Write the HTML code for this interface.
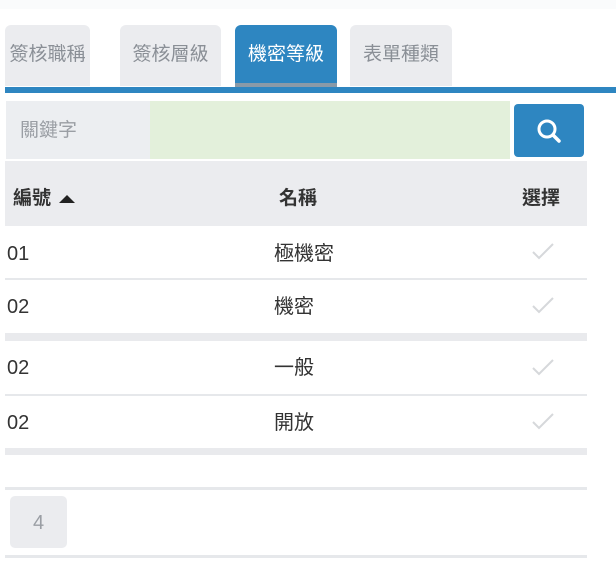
<!DOCTYPE html>
<html><head><meta charset="utf-8"><style>
*{margin:0;padding:0;box-sizing:border-box}
body{width:616px;height:566px;background:#fff;position:relative;overflow:hidden;font-family:"Liberation Sans","Noto Sans CJK TC",sans-serif}
.a{position:absolute}
.tab{position:absolute;top:25px;height:61px;background:#ebecef;border-radius:6px 6px 0 0;color:#8a8f96;font-size:19px;line-height:60px;text-align:center}
.t{position:absolute;font-size:20px;color:#333;line-height:24px}
.h{font-weight:bold;color:#333;font-size:19px}
.chk{position:absolute;left:531px;width:24px;height:20px}
</style></head><body>
<div class="a" style="left:0;top:0;width:616px;height:9px;background:#fafbfc"></div>
<div class="tab" style="left:5px;width:85px">簽核職稱</div>
<div class="tab" style="left:120px;width:101px">簽核層級</div>
<div class="tab" style="left:235px;width:102px;background:#2e86c1;color:#fff">機密等級</div>
<div class="a" style="left:235px;top:83px;width:102px;height:4px;background:#8a9aa8"></div>
<div class="tab" style="left:350px;width:102px">表單種類</div>
<div class="a" style="left:5px;top:87px;width:611px;height:6px;background:#2e86c1"></div>
<div class="a" style="left:6px;top:101px;width:144px;height:58px;background:#eceef1;color:#9a9ea4;font-size:19px;line-height:60px;padding-left:14px">關鍵字</div>
<div class="a" style="left:150px;top:101px;width:360px;height:58px;background:#e3f0db"></div>
<div class="a" style="left:514px;top:104px;width:70px;height:53px;background:#2e86c1;border-radius:4px">
<svg width="70" height="53"><circle cx="33" cy="25" r="8" fill="none" stroke="#fff" stroke-width="3"/><line x1="39" y1="31" x2="45" y2="37" stroke="#fff" stroke-width="3.5" stroke-linecap="round"/></svg></div>
<div class="a" style="left:5px;top:161px;width:582px;height:65px;background:#ebecef"></div>
<div class="t h" style="left:13px;top:187px">編號</div>
<svg class="a" style="left:58px;top:194px" width="18" height="10"><polygon points="1,9 9,1 17,9" fill="#222"/></svg>
<div class="t h" style="left:279px;top:187px">名稱</div>
<div class="t h" style="left:522px;top:187px">選擇</div>
<div class="a" style="left:5px;top:278px;width:582px;height:2px;background:#e6e8eb"></div>
<div class="a" style="left:5px;top:333px;width:582px;height:8px;background:#e9eaed"></div>
<div class="a" style="left:5px;top:394px;width:582px;height:2px;background:#e6e8eb"></div>
<div class="a" style="left:5px;top:448px;width:582px;height:7px;background:#e9eaed"></div>
<div class="t" style="left:7px;top:242px">01</div><div class="t" style="left:274px;top:242px">極機密</div>
<div class="t" style="left:7px;top:295px">02</div><div class="t" style="left:274px;top:295px">機密</div>
<div class="t" style="left:7px;top:356px">02</div><div class="t" style="left:274px;top:356px">一般</div>
<div class="t" style="left:7px;top:411px">02</div><div class="t" style="left:274px;top:411px">開放</div>
<svg class="chk" style="top:241px" viewBox="0 0 24 20"><polyline points="2,11 8,17 22,3" fill="none" stroke="#d6d8db" stroke-width="2"/></svg>
<svg class="chk" style="top:295px" viewBox="0 0 24 20"><polyline points="2,11 8,17 22,3" fill="none" stroke="#d6d8db" stroke-width="2"/></svg>
<svg class="chk" style="top:357px" viewBox="0 0 24 20"><polyline points="2,11 8,17 22,3" fill="none" stroke="#d6d8db" stroke-width="2"/></svg>
<svg class="chk" style="top:411px" viewBox="0 0 24 20"><polyline points="2,11 8,17 22,3" fill="none" stroke="#d6d8db" stroke-width="2"/></svg>
<div class="a" style="left:5px;top:487px;width:582px;height:3px;background:#e6e8eb"></div>
<div class="a" style="left:10px;top:496px;width:57px;height:52px;background:#ebecef;border-radius:5px;color:#9a9ea4;font-size:20px;line-height:54px;text-align:center">4</div>
<div class="a" style="left:5px;top:555px;width:582px;height:3px;background:#e6e8eb"></div>
</body></html>
